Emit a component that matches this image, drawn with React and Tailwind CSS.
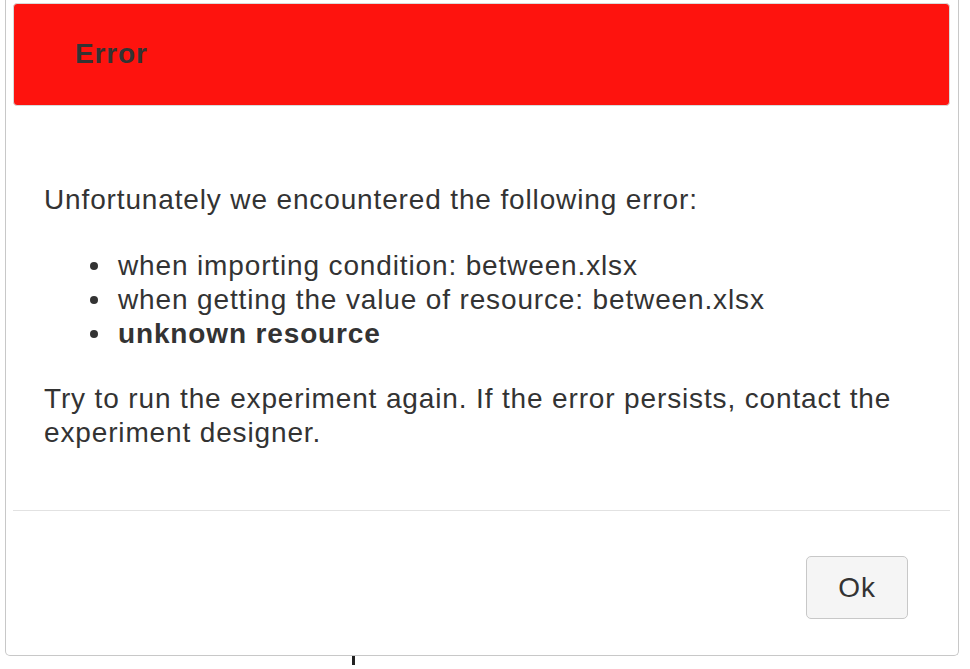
export default function App() {
  const items = [
    { t: "when importing condition: between.xlsx", b: false },
    { t: "when getting the value of resource: between.xlsx", b: false },
    { t: "unknown resource", b: true },
  ];
  return (
    <div className="w-[970px] h-[669px] bg-white relative" style={{ fontFamily: '"Liberation Sans", Arial, sans-serif' }}>
      <div className="ml-[5px] w-[954px] h-[656px] border-x border-b border-[#c8c8c8] rounded-b-[5px] flex flex-col text-[#333]">
        <div className="mt-[3px] ml-[7px] mr-[8px] h-[103px] bg-[#fe130e] border border-[#d9d9d9] rounded-[4px] flex items-center pl-[61px]">
          <span className="text-[28px] tracking-[0.85px] font-bold text-[#333] leading-none mt-[-2px]">Error</span>
        </div>
        <div className="px-[38px] pt-[77px] h-[404px] text-[28px] tracking-[0.86px] leading-[34px]">
          <p>Unfortunately we encountered the following error:</p>
          <ul className="pl-[46px] mt-[32px]">
            {items.map((it) => (
              <li key={it.t} className={"flex items-center " + (it.b ? "font-bold" : "")}>
                <span className="w-[8px] h-[8px] rounded-full bg-[#333] mr-[20px] shrink-0" />
                <span>{it.t}</span>
              </li>
            ))}
          </ul>
          <p className="mt-[31px]">Try to run the experiment again. If the error persists, contact the experiment designer.</p>
        </div>
        <div className="ml-[7px] mr-[8px] border-t border-[#e2e2e2]" />
        <div className="flex justify-end pr-[50px] pt-[45px]">
          <button className="w-[102px] h-[63px] bg-[#f5f5f5] border border-[#c8c8c8] rounded-[5px] text-[28px] tracking-[0.8px] text-[#333]">Ok</button>
        </div>
      </div>
      <div className="ml-[352px] w-[3px] h-[9px] bg-[#222]" />
    </div>
  );
}
